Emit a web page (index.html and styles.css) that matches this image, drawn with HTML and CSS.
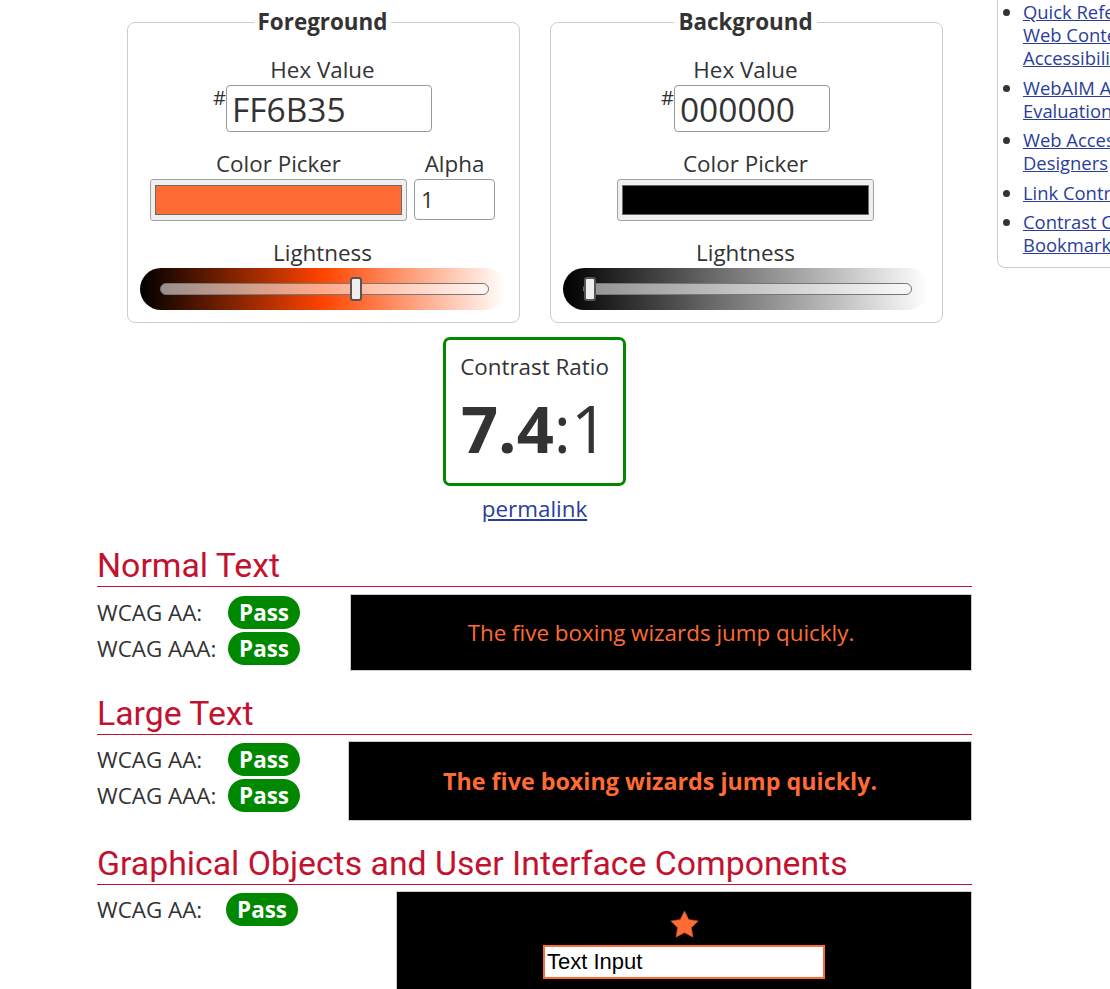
FILE: index.html
```html
<!DOCTYPE html>
<html lang="en">
<head>
<meta charset="utf-8">
<title>Contrast Checker</title>
<link rel="stylesheet" href="styles.css">
</head>
<body>
<div class="page">
  <main class="main">
    <div class="pickers">
      <fieldset class="colorset">
        <legend>Foreground</legend>
        <div class="field-label">Hex Value</div>
        <div class="hex-row"><span class="hash">#</span><input class="hex-input hex-fg" type="text" value="FF6B35"></div>
        <div class="picker-row">
          <div class="picker-col">
            <div class="field-label col-label">Color Picker</div>
            <div class="picker"><div class="swatch swatch-fg"></div></div>
          </div>
          <div class="picker-col">
            <div class="field-label col-label">Alpha</div>
            <input class="alpha-input" type="text" value="1">
          </div>
        </div>
        <div class="field-label light-label">Lightness</div>
        <div class="light-band band-fg"><div class="track"><div class="thumb" style="left:189px"></div></div></div>
      </fieldset>
      <fieldset class="colorset">
        <legend>Background</legend>
        <div class="field-label">Hex Value</div>
        <div class="hex-row"><span class="hash">#</span><input class="hex-input hex-bg" type="text" value="000000"></div>
        <div class="picker-row">
          <div class="picker-col">
            <div class="field-label col-label">Color Picker</div>
            <div class="picker"><div class="swatch swatch-bg"></div></div>
          </div>
        </div>
        <div class="field-label light-label">Lightness</div>
        <div class="light-band band-bg"><div class="track"><div class="thumb" style="left:0px"></div></div></div>
      </fieldset>
    </div>

    <div class="ratio-box">
      <div class="ratio-label">Contrast Ratio</div>
      <div class="ratio-value"><b>7.4</b>:1</div>
    </div>
    <div class="permalink-wrap"><a href="#">permalink</a></div>

    <section class="result">
      <h2 class="result-title">Normal Text</h2>
      <div class="result-body body-normal">
        <div class="checks checks-normal">
          <div class="check-row"><span class="check-label">WCAG AA:</span><span class="badge">Pass</span></div>
          <div class="check-row"><span class="check-label">WCAG AAA:</span><span class="badge">Pass</span></div>
        </div>
        <div class="sample sample-normal">The five boxing wizards jump quickly.</div>
      </div>
    </section>

    <section class="result">
      <h2 class="result-title">Large Text</h2>
      <div class="result-body">
        <div class="checks checks-large">
          <div class="check-row"><span class="check-label">WCAG AA:</span><span class="badge">Pass</span></div>
          <div class="check-row"><span class="check-label">WCAG AAA:</span><span class="badge">Pass</span></div>
        </div>
        <div class="sample sample-large">The five boxing wizards jump quickly.</div>
      </div>
    </section>

    <section class="result">
      <h2 class="result-title">Graphical Objects and User Interface Components</h2>
      <div class="result-body">
        <div class="checks checks-graphic">
          <div class="check-row"><span class="check-label label-graphic">WCAG AA:</span><span class="badge">Pass</span></div>
        </div>
        <div class="sample sample-graphic">
          <svg class="star" viewBox="1.5 1.5 21 20" width="29" height="28" aria-hidden="true"><polygon points="12,2 15.09,8.26 22,9.27 17,14.14 18.18,21.02 12,17.77 5.82,21.02 7,14.14 2,9.27 8.91,8.26" fill="#ff6b35" stroke="#c9471c" stroke-width="0.4"/></svg>
          <input class="text-input" type="text" value="Text Input">
        </div>
      </div>
    </section>
  </main>

  <aside class="sidebar">
    <ul class="links">
      <li><a href="#">Quick Reference:<br>Web Content<br>Accessibility Guidelines (WCAG)</a></li>
      <li><a href="#">WebAIM Accessibility<br>Evaluation Services</a></li>
      <li><a href="#">Web Accessibility for<br>Designers</a></li>
      <li><a href="#">Link Contrast Checker</a></li>
      <li><a href="#">Contrast Checker<br>Bookmarklet</a></li>
    </ul>
  </aside>
</div>
</body>
</html>
```

FILE: styles.css
```css
html, body {
  margin: 0;
  overflow: hidden;
}
body {
  font-family: "Open Sans", sans-serif;
  color: #333;
  background: #fff;
}
a { color: #2a3d9a; }

.page {
  display: flex;
  align-items: flex-start;
  gap: 25px;
  padding-left: 97px;
}
.main {
  width: 875px;
  flex-shrink: 0;
}

/* color pickers */
.pickers {
  display: flex;
  justify-content: center;
  gap: 30px;
  margin-top: 7px;
}
.colorset {
  width: 393px;
  box-sizing: border-box;
  margin: 0;
  min-width: 0;
  border: 1px solid #ccc;
  border-radius: 8px;
  padding: 18px 13px 12px 12px;
}
.colorset legend {
  margin: 0 auto;
  padding: 0 4px;
  font-weight: 700;
  font-size: 22.4px;
  line-height: 30px;
}
.field-label {
  font-size: 22.4px;
  line-height: 30px;
  text-align: center;
}
.col-label { line-height: 31px; }
.hex-row {
  display: flex;
  justify-content: center;
}
.hash {
  font-size: 20px;
  line-height: 20px;
  margin-top: 3px;
}
.hex-input {
  height: 47px;
  box-sizing: border-box;
  border: 1px solid #999;
  border-radius: 4px;
  font: 33.5px "Open Sans", sans-serif;
  color: #333;
  padding: 0 5px;
  margin: 0;
}
.hex-fg { width: 206px; }
.hex-bg { width: 156px; }

.picker-row {
  display: flex;
  justify-content: center;
  gap: 7px;
  margin-top: 16px;
}
.picker {
  width: 257px;
  height: 42px;
  box-sizing: border-box;
  border: 1px solid #a3a3a3;
  background: #efefef;
  border-radius: 3px;
  padding: 5px 4px;
}
.swatch {
  height: 100%;
  box-sizing: border-box;
  border: 1px solid #6a6a6a;
}
.swatch-fg { background: #ff6b35; }
.swatch-bg { background: #000; }
.alpha-input {
  display: block;
  width: 81px;
  height: 41px;
  box-sizing: border-box;
  border: 1px solid #999;
  border-radius: 4px;
  font: 22.4px "Open Sans", sans-serif;
  color: #333;
  padding: 0 6px;
  margin: 0;
}

.light-label { margin-top: 17px; }
.light-band {
  height: 42px;
  border-radius: 21px;
  padding: 0 17px 0 20px;
  display: flex;
  align-items: center;
}
.band-fg { background: linear-gradient(to right, #000, hsl(16, 100%, 50%), #fff); }
.band-bg { background: linear-gradient(to right, #000, #808080, #fff); }
.track {
  flex: 1;
  height: 12px;
  box-sizing: border-box;
  border: 1px solid #777;
  border-radius: 6px;
  background: rgba(255, 255, 255, 0.55);
  position: relative;
}
.thumb {
  position: absolute;
  top: -7px;
  width: 12px;
  height: 24px;
  box-sizing: border-box;
  background: #eee;
  border: 2px solid #555;
  border-radius: 3px;
}

/* ratio */
.ratio-box {
  width: 183px;
  box-sizing: border-box;
  margin: 14px auto 0;
  border: 3px solid #080;
  border-radius: 7px;
  padding: 12px 0 9px;
  text-align: center;
}
.ratio-label {
  font-size: 22.4px;
  line-height: 30px;
}
.ratio-value {
  font-size: 65px;
  line-height: 92px;
}
.ratio-value b { font-weight: 700; }
.permalink-wrap {
  text-align: center;
  margin-top: 8px;
  font-size: 22.4px;
  line-height: 30px;
}

/* results */
.result { margin-top: 21px; }
.result:first-of-type { margin-top: 20px; }
.result-title {
  margin: 0;
  padding-top: 2px;
  font: 400 33.8px/40px Roboto, sans-serif;
  color: #c3122f;
  border-bottom: 1px solid #c3122f;
}
.result-body {
  display: flex;
  margin-top: 6px;
}
.body-normal { margin-top: 7px; }
.checks { flex-shrink: 0; }
.checks-normal { width: 253px; }
.checks-large { width: 251px; }
.checks-graphic { width: 299px; }
.check-row {
  display: flex;
  align-items: center;
  height: 36px;
  font-size: 22.4px;
}
.check-label { width: 131px; }
.label-graphic { width: 129px; }
.badge {
  width: 72px;
  height: 33px;
  line-height: 33px;
  border-radius: 17px;
  background: #080;
  color: #fff;
  font-weight: 700;
  text-align: center;
}
.sample {
  flex: 1;
  box-sizing: border-box;
  border: 1px solid #ccc;
  background: #000;
  color: #ff6b35;
  display: flex;
  align-items: center;
  justify-content: center;
}
.sample-normal {
  height: 77px;
  font-size: 22.4px;
}
.sample-large {
  height: 80px;
  font-size: 23.3px;
  font-weight: 700;
}
.sample-graphic {
  height: 110px;
  flex-direction: column;
  justify-content: flex-start;
  padding-top: 18px;
}
.star { display: block; }
.text-input {
  display: block;
  margin: 7px 0 0;
  width: 282px;
  height: 34px;
  box-sizing: border-box;
  border: 2px solid #ff6b35;
  background: #fff;
  color: #000;
  font: 22px "Liberation Sans", Arial, sans-serif;
  padding: 0 2px;
}

/* sidebar */
.sidebar {
  width: 300px;
  flex-shrink: 0;
  border: 1px solid #ccc;
  border-top: 0;
  border-radius: 0 0 0 8px;
  padding-bottom: 11px;
}
.links {
  margin: 0;
  padding-left: 25px;
  font-size: 18.4px;
  line-height: 23px;
  white-space: nowrap;
}
.links li { margin-bottom: 6.5px; }
.links li:last-child { margin-bottom: 0; }
```
